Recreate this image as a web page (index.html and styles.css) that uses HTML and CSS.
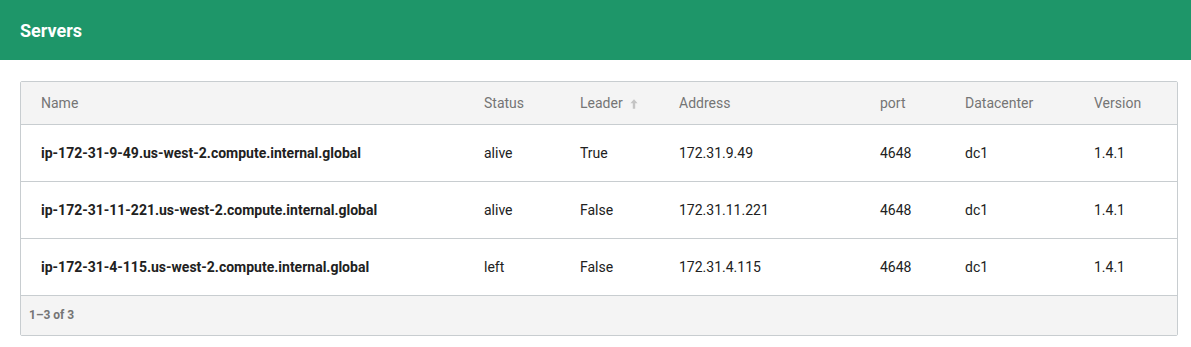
FILE: index.html
```html
<!DOCTYPE html>
<html>
<head>
<meta charset="utf-8">
<link rel="stylesheet" href="styles.css">
</head>
<body>
<header class="topbar"><h1 class="title">Servers</h1></header>
<main class="content">
  <div class="card">
    <table class="grid">
      <colgroup>
        <col class="c-name"><col class="c-status"><col class="c-leader"><col class="c-addr"><col class="c-port"><col class="c-dc"><col class="c-ver">
      </colgroup>
      <thead>
        <tr>
          <th class="first">Name</th>
          <th>Status</th>
          <th>Leader <svg class="sort" viewBox="0 0 10 12" width="8" height="10"><path d="M5 0L0.5 5H3.5V12H6.5V5H9.5Z" fill="#c4c4c4"/></svg></th>
          <th>Address</th>
          <th>port</th>
          <th>Datacenter</th>
          <th>Version</th>
        </tr>
      </thead>
      <tbody>
        <tr>
          <td class="first name">ip-172-31-9-49.us-west-2.compute.internal.global</td>
          <td>alive</td><td>True</td><td>172.31.9.49</td><td>4648</td><td>dc1</td><td>1.4.1</td>
        </tr>
        <tr>
          <td class="first name">ip-172-31-11-221.us-west-2.compute.internal.global</td>
          <td>alive</td><td>False</td><td>172.31.11.221</td><td>4648</td><td>dc1</td><td>1.4.1</td>
        </tr>
        <tr>
          <td class="first name">ip-172-31-4-115.us-west-2.compute.internal.global</td>
          <td>left</td><td>False</td><td>172.31.4.115</td><td>4648</td><td>dc1</td><td>1.4.1</td>
        </tr>
      </tbody>
    </table>
    <div class="footer">1–3 of 3</div>
  </div>
</main>
</body>
</html>
```
FILE: styles.css
```css
* { box-sizing: border-box; }
html, body { margin: 0; padding: 0; background: #fff; }
body { font-family: Roboto, "Liberation Sans", sans-serif; color: #212121; }
.topbar {
  height: 60px;
  background: #1e9669;
  display: flex;
  align-items: center;
  padding-left: 20px;
}
.title { margin: 0; font-size: 18px; font-weight: 700; color: #fff; }
.content { padding: 21px 13px 12px 20px; }
.card {
  border: 1px solid #c8cdd0;
  border-radius: 2px;
  background: #fff;
}
.grid { width: 100%; border-collapse: collapse; table-layout: fixed; }
.c-name { width: 463px; }
.c-status { width: 96px; }
.c-leader { width: 99px; }
.c-addr { width: 201px; }
.c-port { width: 85px; }
.c-dc { width: 129px; }
.c-ver { width: 83px; }
thead tr { background: #f4f4f4; }
th {
  height: 42px;
  text-align: left;
  font-weight: 400;
  font-size: 14px;
  color: #757575;
  padding: 0;
  border-bottom: 1px solid #c8cdd0;
  white-space: nowrap;
}
td {
  height: 57px;
  font-size: 14px;
  padding: 0;
  color: #212121;
  border-bottom: 1px solid #c8cdd0;
  white-space: nowrap;
}
.first { padding-left: 20px; }
.name { font-weight: 700; }
.sort { vertical-align: -1px; margin-left: 4px; }
.footer {
  height: 39px;
  background: #f4f4f4;
  padding-left: 8px;
  display: flex;
  align-items: center;
  font-size: 12px;
  font-weight: 700;
  color: #757575;
}
```
